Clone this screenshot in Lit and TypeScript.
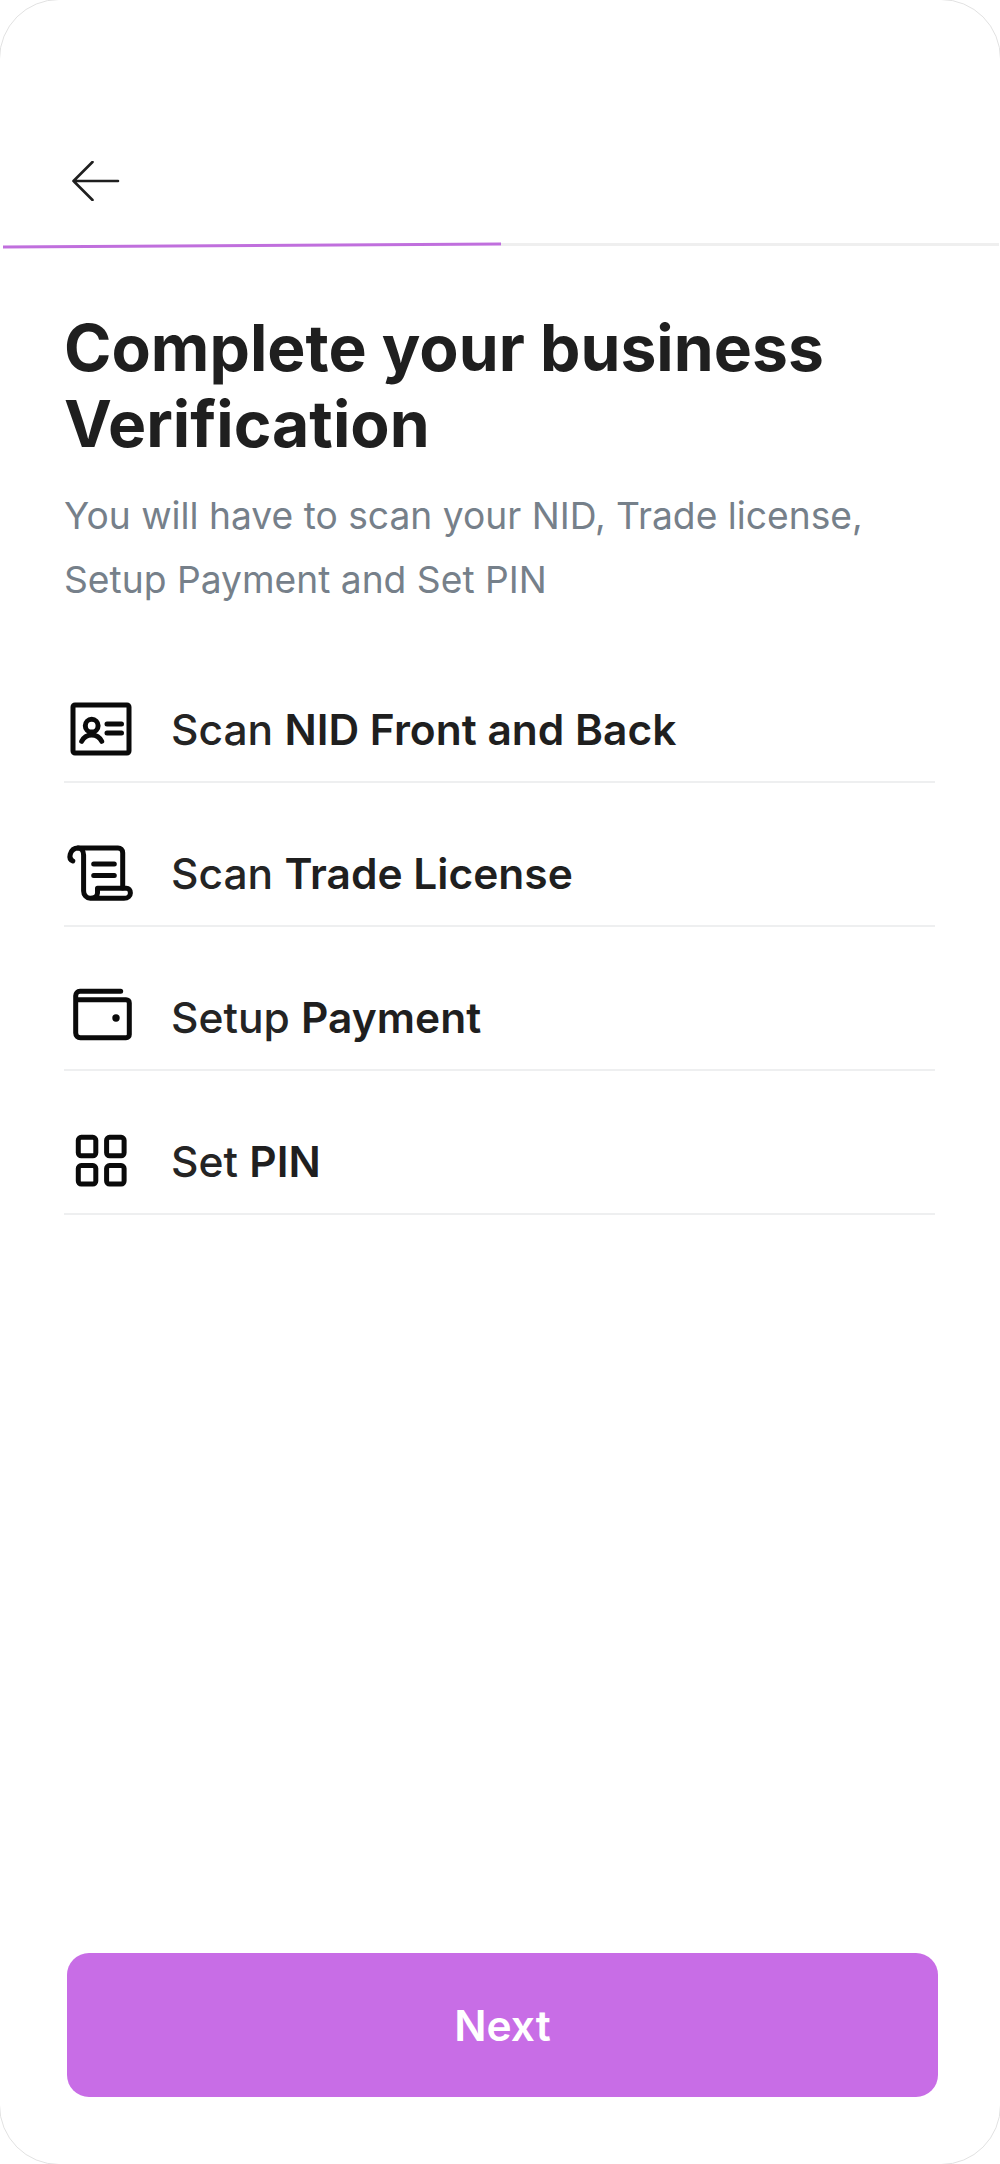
import { LitElement, html, css, svg } from "lit";
import { customElement } from "lit/decorators.js";

type Step = { lead: string; strong: string; icon: ReturnType<typeof svg> };

const steps: Step[] = [
  {
    lead: "Scan ",
    strong: "NID Front and Back",
    icon: svg`
      <rect x="9" y="12" width="56" height="48" rx="2" />
      <circle cx="27.7" cy="32.7" r="6.4" />
      <path d="M17.7 48.3c2-4.2 5.6-6.4 10-6.4s8 2.2 10 6.4" />
      <path d="M43 31h14.5M43 40h14.5" />`,
  },
  {
    lead: "Scan ",
    strong: "Trade License",
    icon: svg`
      <path d="M8.8 24c-2.4-1-3.4-3.6-2.6-6.6 1-3.8 4-6.4 8-6.4H54c2.7 0 4.7 2 4.7 4.7V51" />
      <path d="M14 11c3.4 0 5.6 3 5.6 7v36c0 4 3 7.3 6.6 7.3H60c4 0 6.4-2.6 6.4-5.4s-1.8-4.6-4-4.6H33.5v4.7c0 3-2.8 5.3-7.3 5.3" />
      <path d="M29.7 27h20.6M29.7 38.5h20.6" />`,
  },
  {
    lead: "Setup ",
    strong: "Payment",
    icon: svg`
      <path d="M56.7 10.3H16c-2.6 0-4.3 2-4.3 4.5V52c0 2.8 2 4.7 4.7 4.7H62c2 0 3.3-1.4 3.3-3.3V22c0-2-1.3-3.3-3.3-3.3H11.7" />
      <circle class="dot" cx="52" cy="37" r="3.7" />`,
  },
  {
    lead: "Set ",
    strong: "PIN",
    icon: svg`
      <rect x="14.3" y="12.3" width="17.5" height="18.5" rx="3" />
      <rect x="42.6" y="12.3" width="17.5" height="18.5" rx="3" />
      <rect x="14.3" y="40.6" width="17.5" height="18.5" rx="3" />
      <rect x="42.6" y="40.6" width="17.5" height="18.5" rx="3" />`,
  },
];

@customElement("app-root")
export class AppRoot extends LitElement {
  static styles = css`
    :host {
      display: block;
      font-family: Inter, "Liberation Sans", sans-serif;
      color: #1f1f1f;
      overflow: hidden;
      height: 2164px;
      background: #fff;
    }
    .screen {
      box-sizing: border-box;
      width: 1002px;
      height: 2166px;
      margin: -1px;
      border: 1px solid #e2e2e2;
      border-radius: 60px;
      background: #fff;
      display: flex;
      flex-direction: column;
      position: relative;
    }
    .top {
      height: 201px;
      padding: 0 0 0 72px;
      display: flex;
      align-items: flex-end;
    }
    .back {
      display: block;
      width: 48px;
      height: 40px;
      fill: none;
      stroke: #1f1f1f;
      stroke-width: 2.6;
      stroke-linecap: round;
      stroke-linejoin: round;
    }
    .progress {
      display: block;
      margin-top: 40px;
      width: 1000px;
      height: 8px;
    }
    .content {
      padding: 61px 64px 0 64px;
      flex: 1;
    }
    h1 {
      margin: 0;
      font-size: 64.2px;
      line-height: 76px;
      font-weight: 700;
      color: #1f1f1f;
    }
    .sub {
      margin: 22px 0 0;
      font-size: 37.2px;
      line-height: 64px;
      font-weight: 400;
      color: #76808a;
    }
    .steps {
      list-style: none;
      margin: 27px 0 0;
      padding: 0;
      width: 871px;
    }
    .step {
      display: flex;
      align-items: center;
      gap: 35px;
      height: 72px;
      padding: 54px 0 16px;
      box-sizing: content-box;
      border-bottom: 2px solid #eeeff0;
      font-size: 42.5px;
      font-weight: 450;
      color: #242424;
    }
    .step b {
      font-weight: 600;
      color: #1f1f1f;
    }
    .step svg {
      flex: none;
      width: 72px;
      height: 72px;
      fill: none;
      stroke: #0a0a0a;
      stroke-width: 5;
      stroke-linecap: round;
      stroke-linejoin: round;
    }
    .step svg .dot {
      fill: #0a0a0a;
      stroke: none;
    }
    .footer {
      padding: 0 62px 67px 67px;
    }
    .next {
      display: flex;
      align-items: center;
      justify-content: center;
      width: 100%;
      height: 144px;
      border: 0;
      border-radius: 22px;
      background: #c86de6;
      color: #fff;
      font: 600 42.5px Inter, "Liberation Sans", sans-serif;
    }
  `;

  render() {
    return html`
      <div class="screen">
        <div class="top">
          <svg class="back" viewBox="0 0 48 40" aria-hidden="true">
            <path d="M46 20H1.5M20.5 1 1.5 20l19 19" />
          </svg>
        </div>
        <svg class="progress" viewBox="0 0 1000 8" preserveAspectRatio="none" aria-hidden="true">
          <rect x="501" y="2" width="498" height="3" fill="#efefef" />
          <path d="M3 4.5 501 1.5V4.5L3 7.5Z" fill="#c06fdd" />
        </svg>
        <div class="content">
          <h1>Complete your business<br />Verification</h1>
          <p class="sub">
            You will have to scan your NID, Trade license,<br />Setup Payment and Set PIN
          </p>
          <ul class="steps">
            ${steps.map(
              (s) => html`
                <li class="step">
                  <svg viewBox="0 0 72 72" aria-hidden="true">${s.icon}</svg>
                  <span>${s.lead}<b>${s.strong}</b></span>
                </li>
              `
            )}
          </ul>
        </div>
        <div class="footer">
          <button class="next">Next</button>
        </div>
      </div>
    `;
  }
}
